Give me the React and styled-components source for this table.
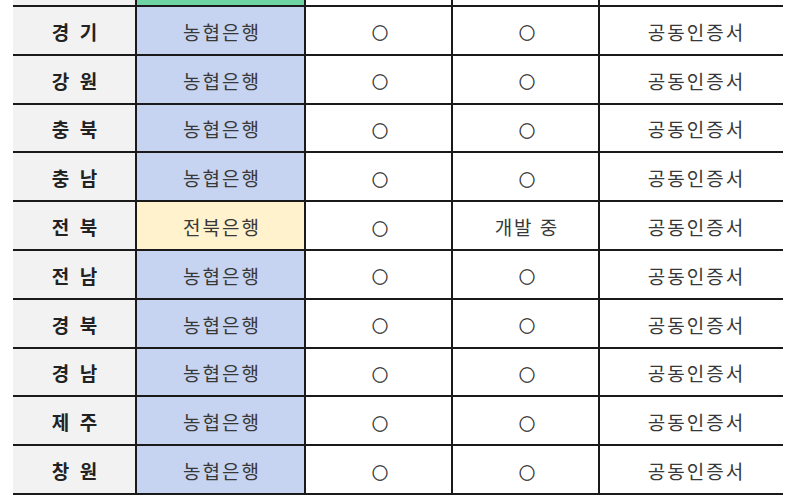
import React from "react";
import styled, { createGlobalStyle } from "styled-components";

const Global = createGlobalStyle`
  html, body { margin: 0; padding: 0; background: #ffffff; }
  body { font-family: "Noto Sans CJK KR", "Noto Sans", sans-serif; }
`;

const Page = styled.div`
  width: 800px;
  height: 500px;
  overflow: hidden;
  padding-left: 13px;
  box-sizing: border-box;
`;

const Grid = styled.div`
  display: grid;
  width: 770px;
  grid-template-columns: 124px 169px 147px 147px 183px;
  grid-auto-rows: 48.8px;
`;

const HeadGridRow = styled.div`
  display: grid;
  width: 770px;
  grid-template-columns: 124px 169px 147px 147px 183px;
`;

const HeaderCell = styled.div`
  box-sizing: border-box;
  height: 7px;
  background: ${(p) => p.$bg};
  border-bottom: 2px solid #1a1a1a;
  border-right: ${(p) => (p.$last ? "none" : "2px solid #1a1a1a")};
`;

const Row = styled.div`
  display: contents;
`;

const Cell = styled.div`
  box-sizing: border-box;
  display: flex;
  align-items: center;
  justify-content: center;
  background: ${(p) => p.$bg || "#ffffff"};
  border-bottom: 2px solid #1a1a1a;
  border-right: ${(p) => (p.$last ? "none" : "2px solid #1a1a1a")};
  padding: 2px 0 0 ${(p) => (p.$last ? "10px" : "3px")};
  color: #383838;
  font-size: 19px;
  letter-spacing: 2px;
  line-height: 1;
  white-space: pre;
`;

const RegionCell = styled(Cell)`
  font-weight: 700;
  color: #222222;
  letter-spacing: 3px;
  padding-left: 4px;
`;

const Mark = styled.span`
  font-size: 16px;
  letter-spacing: 0;
  color: #333333;
  -webkit-text-stroke: 0.5px #333333;
  padding-top: 2px;
`;

const rows = [
  ["경 기", "농협은행", "○", "○"],
  ["강 원", "농협은행", "○", "○"],
  ["충 북", "농협은행", "○", "○"],
  ["충 남", "농협은행", "○", "○"],
  ["전 북", "전북은행", "○", "개발 중"],
  ["전 남", "농협은행", "○", "○"],
  ["경 북", "농협은행", "○", "○"],
  ["경 남", "농협은행", "○", "○"],
  ["제 주", "농협은행", "○", "○"],
  ["창 원", "농협은행", "○", "○"],
];

const renderVal = (v) => (v === "○" ? <Mark>○</Mark> : v);

export default function App() {
  return (
    <Page>
      <Global />
      <HeadGridRow>
        <HeaderCell $bg="#f2f2f2" />
        <HeaderCell $bg="#6fd4a4" />
        <HeaderCell $bg="#ffffff" />
        <HeaderCell $bg="#ffffff" />
        <HeaderCell $bg="#ffffff" $last />
      </HeadGridRow>
      <Grid>
        {rows.map((r, i) => (
          <Row key={i}>
            <RegionCell $bg="#f2f2f2">{r[0]}</RegionCell>
            <Cell $bg={r[1] === "전북은행" ? "#fff2cc" : "#c6d4f1"}>{r[1]}</Cell>
            <Cell>{renderVal(r[2])}</Cell>
            <Cell>{renderVal(r[3])}</Cell>
            <Cell $last>공동인증서</Cell>
          </Row>
        ))}
      </Grid>
    </Page>
  );
}
